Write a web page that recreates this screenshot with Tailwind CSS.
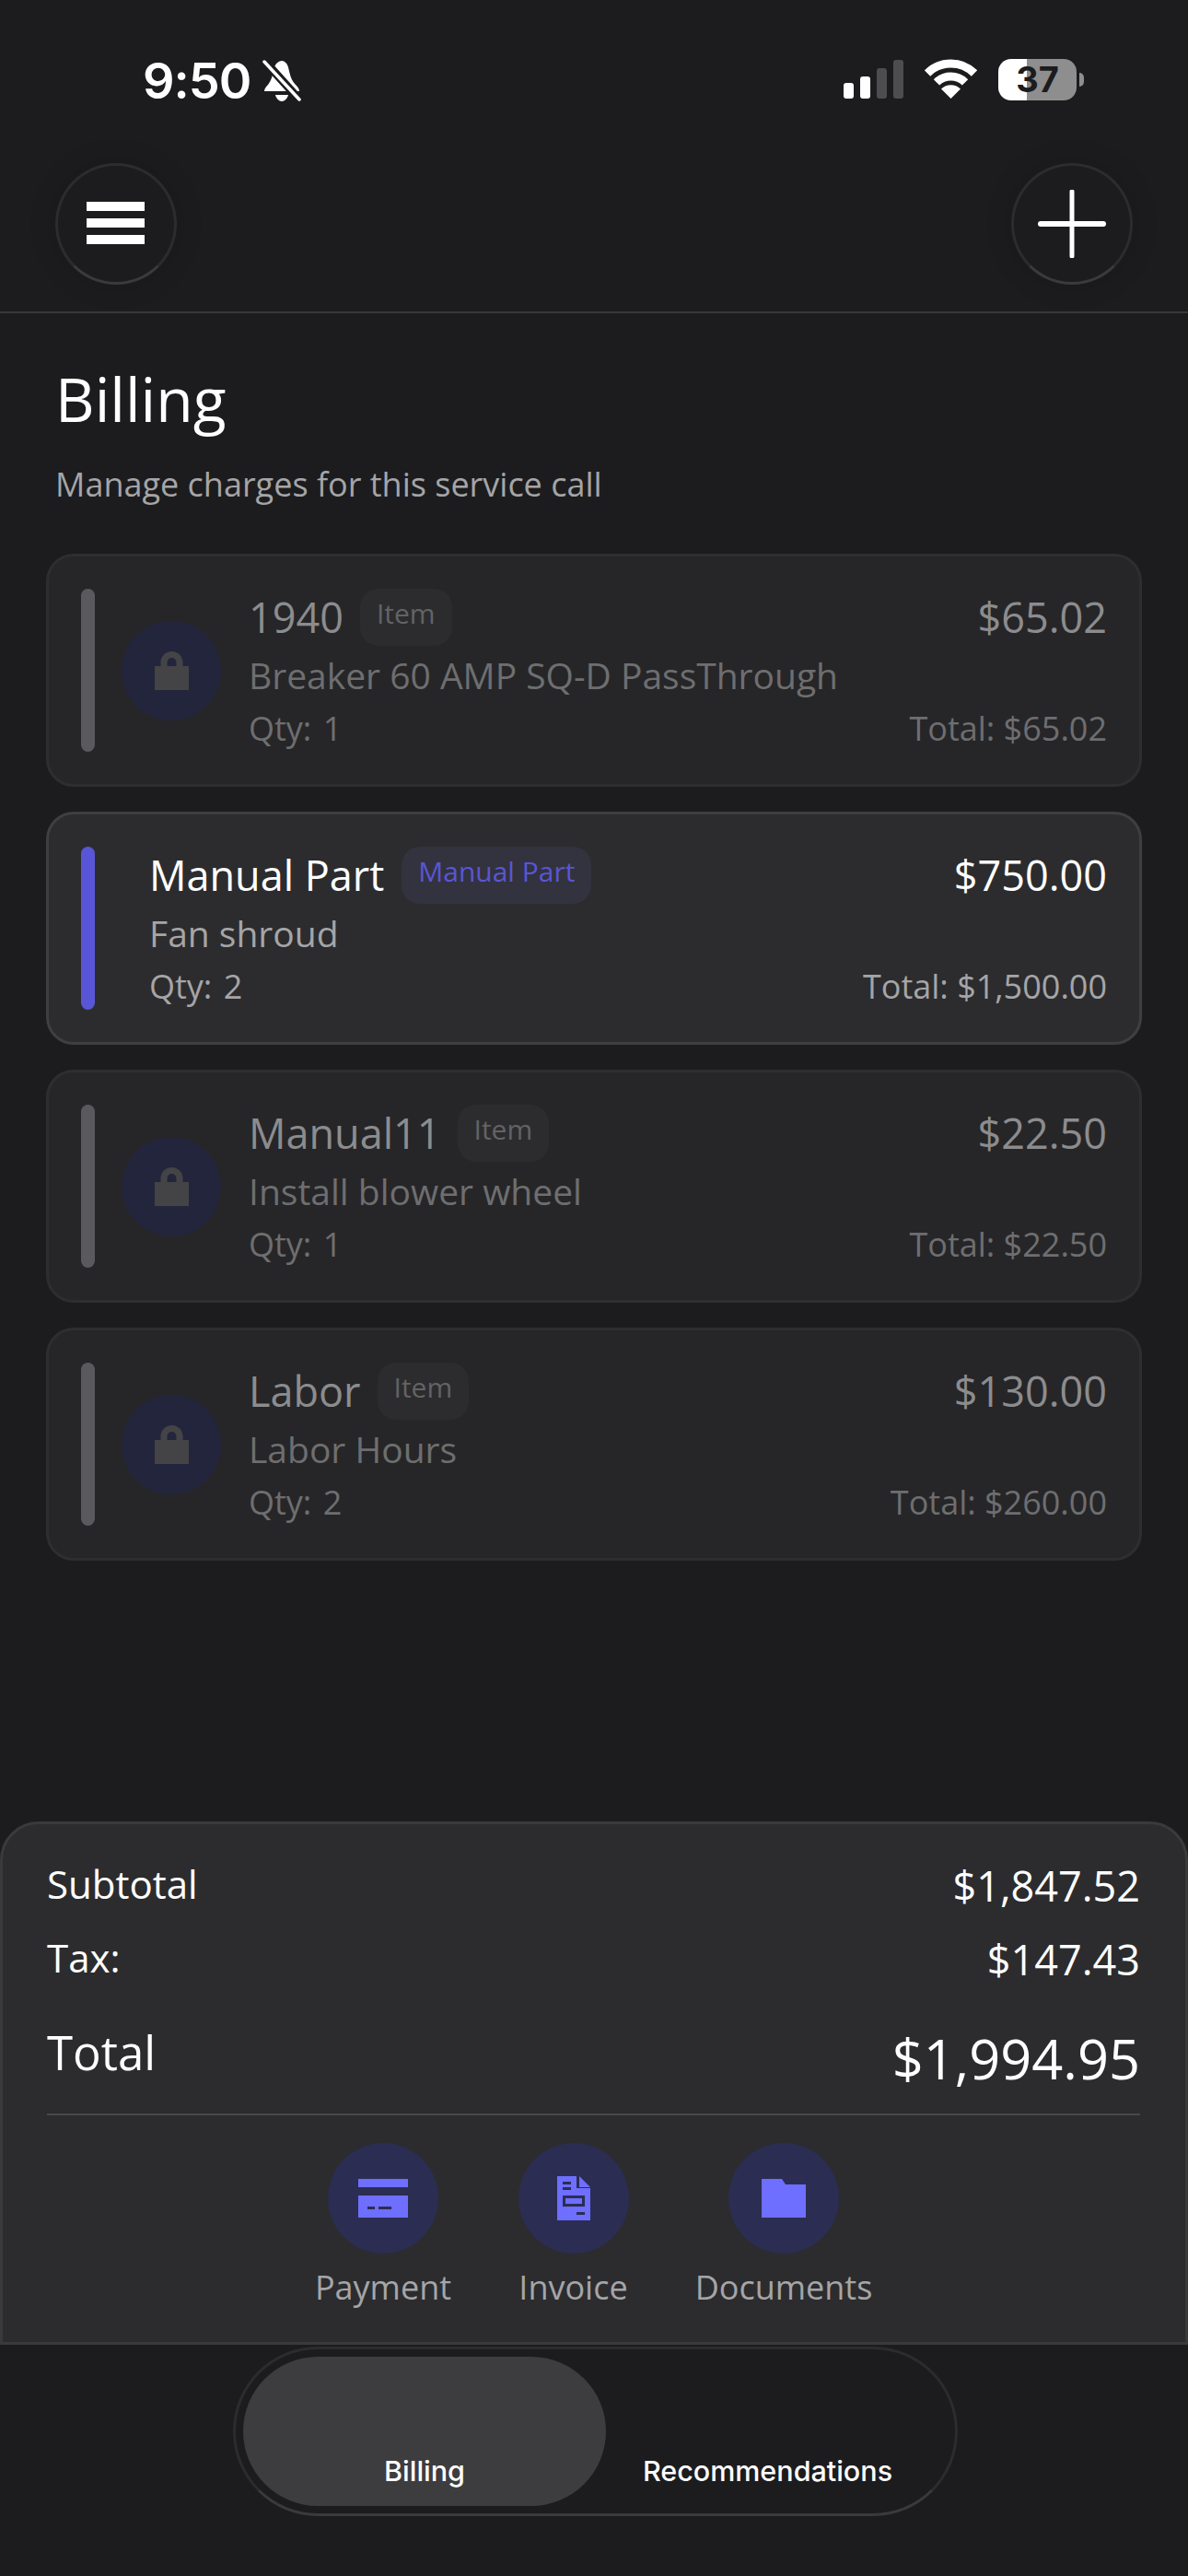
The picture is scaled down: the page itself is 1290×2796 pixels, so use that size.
<!DOCTYPE html>
<html><head><meta charset="utf-8"><script src="https://cdn.jsdelivr.net/npm/@tailwindcss/browser@4"></script></head>
<body class="bg-[#1c1c1e]">
<div class="w-[1290px] h-[2796px] flex flex-col bg-[#1c1c1e] font-['Open_Sans',sans-serif] overflow-hidden">
  <!-- status -->
  <div class="h-[177px] shrink-0 pt-[56px] pl-[155px] pr-[113px] flex justify-between items-start font-['Inter',sans-serif]">
    <div class="flex items-center gap-[13px] h-[60px] mt-[2px]">
      <span class="text-[54px] leading-[60px] font-semibold tracking-[-1px] text-white">9:50</span>
      <svg width="42" height="46" viewBox="0 0 42 46"><path d="M21 1c3 0 6 3 7 7 2 8 3 14 8 19 3 3 4 5 4 7H2c0-2 1-4 4-7 4-5 5-11 7-19 1-4 5-7 8-7z" fill="#fff"/><path d="M14 38h14c-1 4-4 7-7 7s-6-3-7-7z" fill="#fff"/><path d="M3 2l37 41" stroke="#1c1c1e" stroke-width="9"/><path d="M2 2l38 41" stroke="#fff" stroke-width="3.5" stroke-linecap="round"/></svg>
    </div>
    <div class="flex items-center h-[60px] gap-[22px]">
      <svg width="66" height="42" viewBox="0 0 66 42"><rect x="0" y="25" width="11" height="17" rx="3" fill="#fff"/><rect x="18" y="18" width="11" height="24" rx="3" fill="#fff"/><rect x="36" y="9" width="11" height="33" rx="3" fill="#4d4d4f"/><rect x="54" y="0" width="11" height="42" rx="3" fill="#4d4d4f"/></svg>
      <svg width="58" height="44" viewBox="0 0 58 44"><path d="M3 15.5A36 36 0 0 1 54 15.5M13 25.4A22 22 0 0 1 44 25.4" fill="none" stroke="#fff" stroke-width="9"/><path d="M28.5 43L18 32.5A15 15 0 0 1 39 32.5Z" fill="#fff"/></svg>
      <div class="flex items-center gap-[3px]">
        <div class="w-[85px] h-[45px] rounded-[14px] bg-[linear-gradient(90deg,#fff_0,#fff_36%,#8e8e8e_36%,#8e8e8e_100%)] flex items-center justify-center text-[38px] leading-[45px] font-bold text-[#1c1c1e]">37</div>
        <div class="w-[5px] h-[15px] rounded-r-full bg-[#8e8e8e]"></div>
      </div>
    </div>
  </div>
  <!-- header -->
  <div class="h-[163px] shrink-0 border-b-2 border-[#38383a] px-[60px] flex justify-between items-start">
    <button class="w-[132px] h-[132px] rounded-full border-[3px] border-[#2c2c2e] border-b-[#3a3a3c] bg-[#1c1c1e] shadow-[0_0_30px_rgba(0,0,0,0.15)] flex items-center justify-center pr-[2px] pb-[2px]">
      <span class="flex flex-col gap-[8px]"><span class="block w-[63px] h-[10px] bg-white"></span><span class="block w-[63px] h-[10px] bg-white"></span><span class="block w-[63px] h-[10px] bg-white"></span></span>
    </button>
    <button class="w-[132px] h-[132px] rounded-full border-[3px] border-[#2c2c2e] border-b-[#3a3a3c] bg-[#1c1c1e] shadow-[0_0_30px_rgba(0,0,0,0.15)] flex items-center justify-center">
      <svg width="74" height="74" viewBox="0 0 74 74"><path d="M37 2v70" stroke="#fff" stroke-width="5" stroke-linecap="round"/><path d="M3 37h68" stroke="#fff" stroke-width="6" stroke-linecap="round"/></svg>
    </button>
  </div>
  <!-- title -->
  <div class="pl-[60px] h-[261px] shrink-0 pt-[47px]">
    <h1 class="text-[66px] leading-[90px] text-white">Billing</h1>
    <p class="mt-[24px] text-[36px] leading-[50px] text-[#a5a5a7]">Manage charges for this service call</p>
  </div>
  <!-- cards -->
  <div class="px-[50px] flex flex-col gap-[27px] shrink-0">
    <div class="h-[253px] rounded-[30px] border-[3px] border-[#2e2e30] bg-[#262628] pl-[35px] pr-[35px] py-[35px] flex">
      <div class="w-[15px] rounded-full bg-[#5a5a5e]"></div>
      <div class="ml-[29px] self-center w-[108px] h-[108px] rounded-full bg-[#23253c] flex items-center justify-center">
        <svg width="37" height="42" viewBox="0 0 37 42"><path d="M10 18V12a8.500 8.500 0 0 1 17 0v6" fill="none" stroke="#444446" stroke-width="7"/><rect y="16" width="37" height="26" fill="#444446"/></svg>
      </div>
      <div class="ml-[30px] flex-1 flex flex-col">
        <div class="flex items-start justify-between h-[62px]"><div class="flex items-start"><span class="text-[45px] leading-[62px] text-[#8c8c8e]">1940</span><span class="ml-[18px] h-[62px] px-[18px] rounded-[20px] bg-[#2c2c2e] text-[30px] leading-[54px] text-[#636365]">Item</span></div><span class="text-[45px] leading-[62px] text-[#8c8c8e]">$65.02</span></div>
        <div class="mt-[2px] text-[39px] leading-[60px] text-[#6e6e70]">Breaker 60 AMP SQ-D PassThrough</div>
        <div class="mt-[3px] flex justify-between text-[36px] leading-[50px] text-[#6e6e70]"><span>Qty:<span class="ml-[3px]"> 1</span></span><span>Total: $65.02</span></div>
      </div>
    </div>
    <div class="h-[253px] rounded-[30px] border-[3px] border-[#3f3f41] bg-[#2c2c2e] pl-[35px] pr-[35px] py-[35px] flex">
      <div class="w-[15px] rounded-full bg-[#5856d6]"></div>
      <div class="ml-[59px] flex-1 flex flex-col">
        <div class="flex items-start justify-between h-[62px]"><div class="flex items-start"><span class="text-[45px] leading-[62px] text-white">Manual Part</span><span class="ml-[19px] h-[62px] px-[18px] rounded-[20px] bg-[#33323f] text-[30px] leading-[54px] text-[#5856d6]">Manual Part</span></div><span class="text-[45px] leading-[62px] text-white">$750.00</span></div>
        <div class="mt-[2px] text-[39px] leading-[60px] text-[#a5a5a7]">Fan shroud</div>
        <div class="mt-[3px] flex justify-between text-[36px] leading-[50px] text-[#a5a5a7]"><span>Qty:<span class="ml-[3px]"> 2</span></span><span>Total: $1,500.00</span></div>
      </div>
    </div>
    <div class="h-[253px] rounded-[30px] border-[3px] border-[#2e2e30] bg-[#262628] pl-[35px] pr-[35px] py-[35px] flex">
      <div class="w-[15px] rounded-full bg-[#5a5a5e]"></div>
      <div class="ml-[29px] self-center w-[108px] h-[108px] rounded-full bg-[#23253c] flex items-center justify-center">
        <svg width="37" height="42" viewBox="0 0 37 42"><path d="M10 18V12a8.500 8.500 0 0 1 17 0v6" fill="none" stroke="#444446" stroke-width="7"/><rect y="16" width="37" height="26" fill="#444446"/></svg>
      </div>
      <div class="ml-[30px] flex-1 flex flex-col">
        <div class="flex items-start justify-between h-[62px]"><div class="flex items-start"><span class="text-[45px] leading-[62px] text-[#8c8c8e]">Manual11</span><span class="ml-[18px] h-[62px] px-[18px] rounded-[20px] bg-[#2c2c2e] text-[30px] leading-[54px] text-[#636365]">Item</span></div><span class="text-[45px] leading-[62px] text-[#8c8c8e]">$22.50</span></div>
        <div class="mt-[2px] text-[39px] leading-[60px] text-[#6e6e70]">Install blower wheel</div>
        <div class="mt-[3px] flex justify-between text-[36px] leading-[50px] text-[#6e6e70]"><span>Qty:<span class="ml-[3px]"> 1</span></span><span>Total: $22.50</span></div>
      </div>
    </div>
    <div class="h-[253px] rounded-[30px] border-[3px] border-[#2e2e30] bg-[#262628] pl-[35px] pr-[35px] py-[35px] flex">
      <div class="w-[15px] rounded-full bg-[#5a5a5e]"></div>
      <div class="ml-[29px] self-center w-[108px] h-[108px] rounded-full bg-[#23253c] flex items-center justify-center">
        <svg width="37" height="42" viewBox="0 0 37 42"><path d="M10 18V12a8.500 8.500 0 0 1 17 0v6" fill="none" stroke="#444446" stroke-width="7"/><rect y="16" width="37" height="26" fill="#444446"/></svg>
      </div>
      <div class="ml-[30px] flex-1 flex flex-col">
        <div class="flex items-start justify-between h-[62px]"><div class="flex items-start"><span class="text-[45px] leading-[62px] text-[#8c8c8e]">Labor</span><span class="ml-[18px] h-[62px] px-[18px] rounded-[20px] bg-[#2c2c2e] text-[30px] leading-[54px] text-[#636365]">Item</span></div><span class="text-[45px] leading-[62px] text-[#8c8c8e]">$130.00</span></div>
        <div class="mt-[2px] text-[39px] leading-[60px] text-[#6e6e70]">Labor Hours</div>
        <div class="mt-[3px] flex justify-between text-[36px] leading-[50px] text-[#6e6e70]"><span>Qty:<span class="ml-[3px]"> 2</span></span><span>Total: $260.00</span></div>
      </div>
    </div>
  </div>
  <!-- summary -->
  <div class="mt-[283px] h-[568px] shrink-0 rounded-t-[42px] border-[3px] border-[#3a3a3c] bg-[#2c2c2e] pl-[48px] pr-[49px] pt-[38px] text-white">
    <div class="flex justify-between items-start h-[80px]"><span class="text-[42px] leading-[54px]">Subtotal</span><span class="text-[45px] leading-[58px]">$1,847.52</span></div>
    <div class="flex justify-between items-start h-[80px]"><span class="text-[42px] leading-[54px]">Tax:</span><span class="text-[45px] leading-[58px]">$147.43</span></div>
    <div class="flex justify-between items-start h-[118px] border-b-2 border-[#48484a]"><span class="text-[51px] leading-[98px]">Total</span><span class="text-[59.500px] leading-[112px]">$1,994.95</span></div>
    <div class="mt-[30px] flex justify-center gap-[74px] text-[36px] leading-[50px] text-[#a5a5a7]">
      <div class="flex flex-col items-center gap-[12px] w-[147px]">
        <div class="w-[120px] h-[120px] rounded-full bg-[#2b2d52] flex items-center justify-center">
          <svg width="54" height="42" viewBox="0 0 54 42"><path fill="#6e6eff" fill-rule="evenodd" d="M0 0h54v9H0zM0 18h54v24H0zM10 30v3h8v-3zM22 30v3h14v-3z"/></svg>
        </div>
        <span class="whitespace-nowrap">Payment</span>
      </div>
      <div class="flex flex-col items-center gap-[12px] w-[118px]">
        <div class="w-[120px] h-[120px] rounded-full bg-[#2b2d52] flex items-center justify-center">
          <svg width="36" height="48" viewBox="0 0 36 48"><path fill="#6e6eff" fill-rule="evenodd" d="M0 0h21v13h15v35H0zM6 6v3h9V6zM6 12v3h9v-3zM6 21v12h24V21zM9 24h18v6H9zM21 39v3h9v-3z"/><path fill="#6e6eff" d="M24 0l12 12H24z"/></svg>
        </div>
        <span class="whitespace-nowrap">Invoice</span>
      </div>
      <div class="flex flex-col items-center gap-[12px] w-[191px]">
        <div class="w-[120px] h-[120px] rounded-full bg-[#2b2d52] flex items-center justify-center">
          <svg width="48" height="42" viewBox="0 0 48 42"><path fill="#6e6eff" d="M0 0h22l4 6h22v36H0z"/></svg>
        </div>
        <span class="whitespace-nowrap">Documents</span>
      </div>
    </div>
  </div>
  <!-- tabs -->
  <div class="pt-[2px] pl-[3px] flex justify-center">
    <div class="w-[787px] h-[184px] rounded-[92px] border-[3px] border-[#2c2c2e] border-b-[#3a3a3c] pl-[8px] pt-[8px] flex font-['Inter',sans-serif] text-[30.500px] font-medium text-white">
      <div class="w-[394px] h-[162px] rounded-[81px] bg-[#3d3d3f] flex justify-center items-end pb-[18px] leading-[40px]">Billing</div>
      <div class="flex-1 h-[162px] flex justify-center items-end pb-[18px] leading-[40px] pr-[28px]">Recommendations</div>
    </div>
  </div>
</div>
</body></html>
